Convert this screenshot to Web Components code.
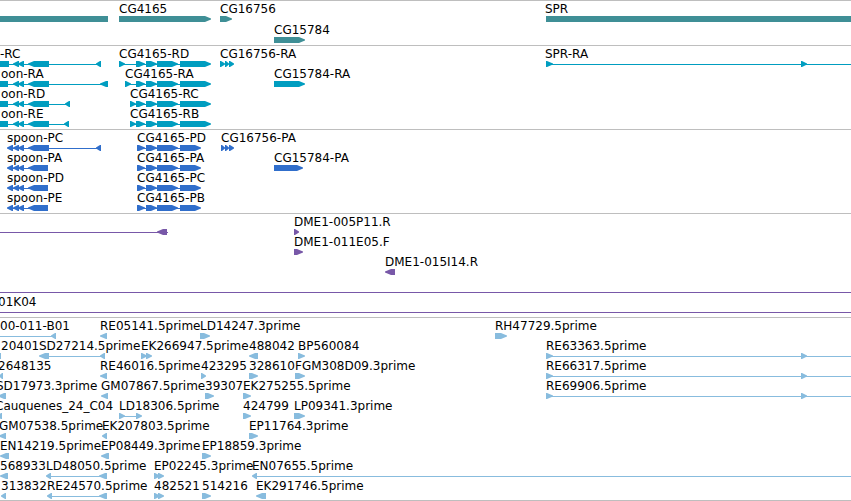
<!DOCTYPE html>
<html lang="en">
<head>
<meta charset="utf-8">
<title>Genome browser</title>
<style>
body { margin: 0; background: #fff; color: #000; font: 12px/14px "DejaVu Sans", sans-serif; }
</style>
</head>
<body>
<genome-view>
  <genome-track style="--ink:#3f8f96; --row-gap:1px">
    <track-row>
      <track-feature shapes="b0-108"></track-feature>
      <track-feature at="119" shapes="r119-211">CG4165</track-feature>
      <track-feature at="220" shapes="r220-232">CG16756</track-feature>
      <track-feature at="545" shapes="b546-end">SPR</track-feature>
    </track-row>
    <track-row>
      <track-feature at="274" shapes="r274-305">CG15784</track-feature>
    </track-row>
  </genome-track>

  <genome-track style="--ink:#009dc0">
    <track-row>
      <track-feature at="0" shapes="b0-9 s0-100 l13-19 l18-24 l28-49 l96-101">-RC</track-feature>
      <track-feature at="119" shapes="s119-207 r119-125 r136-145 r146-157 r157-178 r180-211">CG4165-RD</track-feature>
      <track-feature at="220" shapes="r220-225 r225-229 r229-234">CG16756-RA</track-feature>
      <track-feature at="545" shapes="s546-end r546-553 r801-807">SPR-RA</track-feature>
    </track-row>
    <track-row>
      <track-feature at="1" shapes="b0-8 s0-104 l13-19 l18-24 l28-49 l100-108">oon-RA</track-feature>
      <track-feature at="125" shapes="s125-207 r125-131 r136-145 r146-157 r157-178 r180-211">CG4165-RA</track-feature>
      <track-feature at="274" shapes="r274-305">CG15784-RA</track-feature>
    </track-row>
    <track-row>
      <track-feature at="1" shapes="b0-8 s0-68 l13-19 l18-24 l28-49 l65-70">oon-RD</track-feature>
      <track-feature at="130" shapes="s130-207 r130-136 r136-145 r146-157 r157-178 r180-211">CG4165-RC</track-feature>
    </track-row>
    <track-row>
      <track-feature at="1" shapes="b0-8 s0-68 l13-19 l18-24 l28-49 l64-69">oon-RE</track-feature>
      <track-feature at="130" shapes="s130-207 r130-136 r136-145 r146-157 r157-178 r180-211">CG4165-RB</track-feature>
    </track-row>
  </genome-track>

  <genome-track style="--ink:#306ecb">
    <track-row>
      <track-feature at="7" shapes="s9-100 l7-13 l13-19 l18-24 l28-49 l96-101">spoon-PC</track-feature>
      <track-feature at="137" shapes="s137-197 r137-145 r146-157 r157-178 r180-201">CG4165-PD</track-feature>
      <track-feature at="221" shapes="r221-225 r225-229 r229-234">CG16756-PA</track-feature>
    </track-row>
    <track-row>
      <track-feature at="7" shapes="s9-45 l7-13 l13-19 l18-24 l28-48">spoon-PA</track-feature>
      <track-feature at="137" shapes="s137-197 r137-145 r146-157 r157-178 r180-201">CG4165-PA</track-feature>
      <track-feature at="274" shapes="r274-303">CG15784-PA</track-feature>
    </track-row>
    <track-row>
      <track-feature at="7" shapes="s9-45 l7-13 l13-19 l18-24 l28-48">spoon-PD</track-feature>
      <track-feature at="137" shapes="s137-197 r137-145 r146-157 r157-178 r180-201">CG4165-PC</track-feature>
    </track-row>
    <track-row>
      <track-feature at="7" shapes="s9-45 l7-13 l13-19 l18-24 l28-48">spoon-PE</track-feature>
      <track-feature at="137" shapes="s137-197 r137-145 r146-157 r157-178 r180-201">CG4165-PB</track-feature>
    </track-row>
  </genome-track>

  <genome-track style="--ink:#7858a8">
    <track-row>
      <track-feature shapes="s0-168 l157-167"></track-feature>
      <track-feature at="294" shapes="r294-299">DME1-005P11.R</track-feature>
    </track-row>
    <track-row>
      <track-feature at="294" shapes="r294-303">DME1-011E05.F</track-feature>
    </track-row>
    <track-row>
      <track-feature at="385" shapes="l385-395">DME1-015I14.R</track-feature>
    </track-row>
    <track-row>
      <track-feature shapes="s0-end"></track-feature>
    </track-row>
    <track-row>
      <track-feature at="-2" shapes="s0-end">01K04</track-feature>
    </track-row>
  </genome-track>

  <genome-track style="--ink:#88bcde; --end-gap:1px">
    <track-row>
      <track-feature at="0" shapes="s0-54 l51-56">00-011-B01</track-feature>
      <track-feature at="100" shapes="l100-107">RE05141.5prime</track-feature>
      <track-feature at="200" shapes="r200-210">LD14247.3prime</track-feature>
      <track-feature at="495" shapes="r495-507">RH47729.5prime</track-feature>
    </track-row>
    <track-row>
      <track-feature at="1" shapes="b0-1">20401</track-feature>
      <track-feature at="39" shapes="s42-104 l39-49 l100-105">SD27214.5prime</track-feature>
      <track-feature at="141" shapes="r141-147 r146-152">EK266947.5prime</track-feature>
      <track-feature at="249" shapes="l249-258">488042</track-feature>
      <track-feature at="298" shapes="r298-305">BP560084</track-feature>
      <track-feature at="546" shapes="s546-end r546-553 r801-807">RE63363.5prime</track-feature>
    </track-row>
    <track-row>
      <track-feature at="-2" shapes="l-1-3">2648135</track-feature>
      <track-feature at="100" shapes="l100-107">RE46016.5prime</track-feature>
      <track-feature at="201" shapes="r201-206">423295</track-feature>
      <track-feature at="249" shapes="r249-258">328610</track-feature>
      <track-feature at="295" shapes="r295-305">FGM308D09.3prime</track-feature>
      <track-feature at="546" shapes="s546-end r546-553 r801-807">RE66317.5prime</track-feature>
    </track-row>
    <track-row>
      <track-feature at="-4" shapes="l-2-6">SD17973.3prime</track-feature>
      <track-feature at="101" shapes="l101-108">GM07867.5prime</track-feature>
      <track-feature at="205" shapes="r205-214">39307</track-feature>
      <track-feature at="243" shapes="r243-251">EK275255.5prime</track-feature>
      <track-feature at="546" shapes="s546-end r546-553 r801-807">RE69906.5prime</track-feature>
    </track-row>
    <track-row>
      <track-feature at="-5" shapes="l-3-2">Cauquenes_24_C04</track-feature>
      <track-feature at="119" shapes="s119-139 r119-125 r136-142">LD18306.5prime</track-feature>
      <track-feature at="243" shapes="r243-251">424799</track-feature>
      <track-feature at="294" shapes="r294-305">LP09341.3prime</track-feature>
    </track-row>
    <track-row>
      <track-feature at="-1" shapes="l-1-6">GM07538.5prime</track-feature>
      <track-feature at="102" shapes="l102-107">EK207803.5prime</track-feature>
      <track-feature at="249" shapes="r249-258">EP11764.3prime</track-feature>
    </track-row>
    <track-row>
      <track-feature at="0" shapes="l0-9">EN14219.5prime</track-feature>
      <track-feature at="101" shapes="l101-109">EP08449.3prime</track-feature>
      <track-feature at="202" shapes="r202-211">EP18859.3prime</track-feature>
    </track-row>
    <track-row>
      <track-feature at="0" shapes="l0-8">568933</track-feature>
      <track-feature at="46" shapes="s48-104 l46-51 l99-107">LD48050.5prime</track-feature>
      <track-feature at="154" shapes="r154-160 r158-164">EP02245.3prime</track-feature>
      <track-feature at="252" shapes="s254-end l252-257">EN07655.5prime</track-feature>
    </track-row>
    <track-row>
      <track-feature at="1" shapes="l1-6">313832</track-feature>
      <track-feature at="47" shapes="s49-104 l47-52 l99-107">RE24570.5prime</track-feature>
      <track-feature at="154" shapes="r154-160 r158-164">482521</track-feature>
      <track-feature at="202" shapes="r202-211">514216</track-feature>
      <track-feature at="256" shapes="l256-266">EK291746.5prime</track-feature>
    </track-row>
  </genome-track>
</genome-view>

<script>
function attach(host, html) {
  const t = document.createElement('template');
  t.innerHTML = html;
  host.attachShadow({ mode: 'open' }).append(t.content.cloneNode(true));
}

customElements.define('genome-view', class extends HTMLElement {
  constructor() {
    super();
    attach(this, `<style>:host { display: block; overflow: hidden; border-bottom: 1px solid #bebebe; }</style><slot></slot>`);
  }
});

customElements.define('genome-track', class extends HTMLElement {
  constructor() {
    super();
    attach(this, `<style>
      :host { display: flex; flex-direction: column; gap: var(--row-gap, 0px); padding: 1px 0 var(--end-gap, 2px); border-top: 1px solid #bebebe; }
    </style><slot></slot>`);
  }
});

/* All features of a row share one grid cell and are offset by genome position. */
customElements.define('track-row', class extends HTMLElement {
  constructor() {
    super();
    attach(this, `<style>
      :host { display: grid; grid-template-columns: minmax(0, 1fr); }
      ::slotted(*) { grid-area: 1 / 1; }
    </style><slot></slot>`);
  }
});

/* shapes: b = box, s = strand line, r / l = arrow pointing right / left, followed by from-to */
customElements.define('track-feature', class extends HTMLElement {
  constructor() {
    super();
    attach(this, `<style>
      :host { display: block; min-width: 0; }
      .label { min-height: 14px; white-space: nowrap; }
      svg { display: block; width: 100%; height: 6px; fill: var(--ink); }
    </style><div class="label"><slot></slot></div><svg aria-hidden="true"></svg>`);
  }
  connectedCallback() {
    const root = this.shadowRoot;
    root.querySelector('.label').style.marginLeft = (this.getAttribute('at') || 0) + 'px';
    root.querySelector('svg').innerHTML = this.getAttribute('shapes').split(' ').map(s => {
      const [, kind, from, to] = s.match(/^([bslr])(-?\d+)-(\w+)$/);
      const a = +from, b = +to;
      if (kind === 'b' || kind === 's') {
        const w = to === 'end' ? '100%' : b - a;
        return `<rect x="${a}" y="${kind === 's' ? 3 : 0}" width="${w}" height="${kind === 's' ? 1 : 6}"/>`;
      }
      const head = Math.min(b - a - 1, 6);
      return kind === 'r'
        ? `<path d="M${a} 0H${b - head}L${b} 2.5V3.5L${b - head} 6H${a}Z"/>`
        : `<path d="M${b} 0H${a + head}L${a} 2.5V3.5L${a + head} 6H${b}Z"/>`;
    }).join('');
  }
});
</script>
</body>
</html>
